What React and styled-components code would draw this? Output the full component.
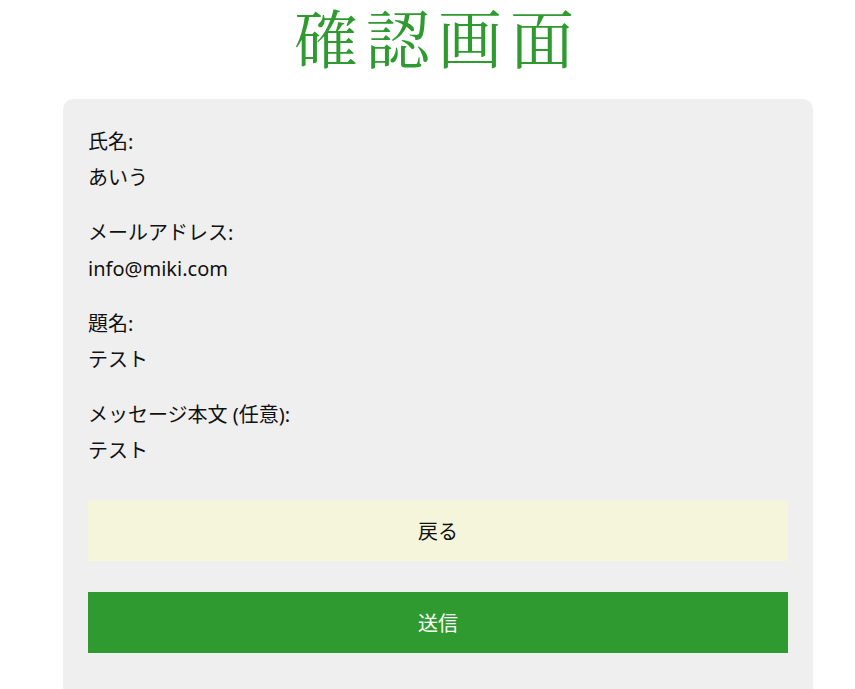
import React from "react";
import styled, { createGlobalStyle } from "styled-components";

const GlobalStyle = createGlobalStyle`
  body {
    margin: 0;
    background: #ffffff;
    font-family: "Noto Sans", "Noto Sans CJK JP", sans-serif;
    color: #111;
  }
`;

export const Page = styled.div`
  padding-left: 21px;
`;

export const Title = styled.h1`
  margin: 0;
  text-align: center;
  font-family: "Liberation Serif", "Noto Serif CJK JP", serif;
  font-weight: 400;
  font-size: 64px;
  line-height: 84px;
  letter-spacing: 8px;
  color: #2e9a30;
`;

export const Card = styled.div`
  width: 700px;
  margin: 15px auto 0;
  padding: 25px 25px 50px;
  background: #efefef;
  border-radius: 10px;
`;

export const Field = styled.div`
  margin-bottom: 19px;
`;

export const Label = styled.div`
  font-size: 20px;
  line-height: 36px;
`;

export const Value = styled.div`
  font-size: 20px;
  line-height: 36px;
`;

export const Button = styled.button`
  display: block;
  width: 100%;
  height: 61px;
  margin-top: 31px;
  border: none;
  border-radius: 0;
  font-family: "Noto Sans CJK JP", sans-serif;
  font-size: 20px;
  background: ${(p) => (p.$primary ? "#2e9a30" : "#f5f5dc")};
  color: ${(p) => (p.$primary ? "#ffffff" : "#111111")};
  cursor: pointer;
`;

const fields = [
  { label: "氏名:", value: "あいう" },
  { label: "メールアドレス:", value: "info@miki.com" },
  { label: "題名:", value: "テスト" },
  { label: "メッセージ本文 (任意):", value: "テスト" },
];

const App = () => {
  return (
    <Page>
      <GlobalStyle />
      <Title>確認画面</Title>
      <Card>
        {fields.map((f) => (
          <Field key={f.label}>
            <Label>{f.label}</Label>
            <Value>{f.value}</Value>
          </Field>
        ))}
        <Button>戻る</Button>
        <Button $primary>送信</Button>
      </Card>
    </Page>
  );
};

export default App;
